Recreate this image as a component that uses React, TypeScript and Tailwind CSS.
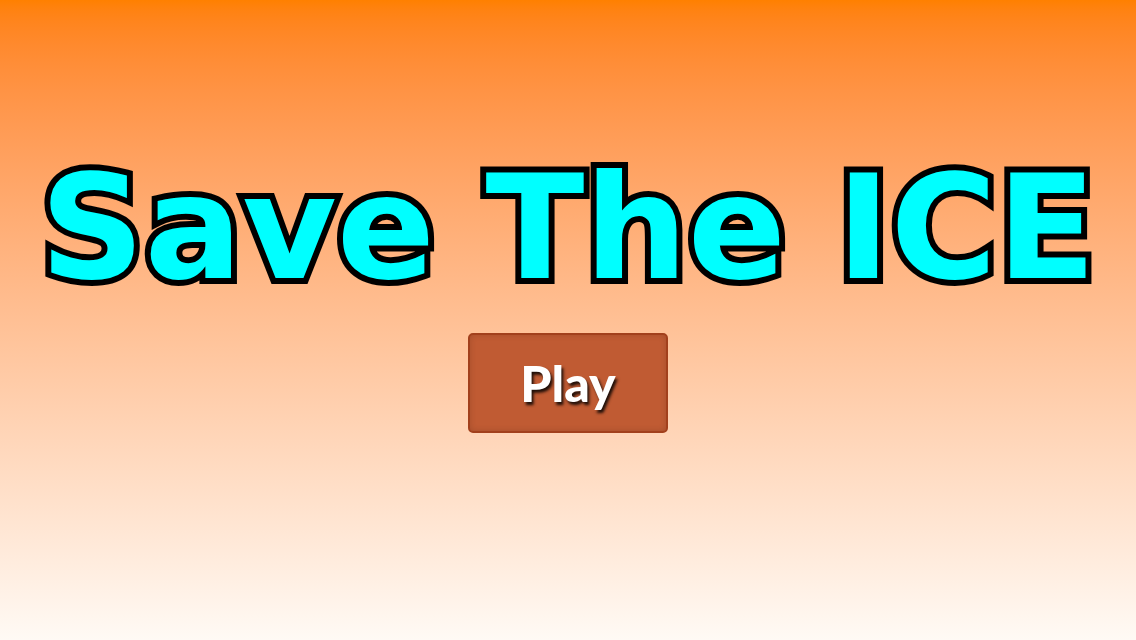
export default function App() {
  return (
    <div className="w-[1136px] h-[640px] bg-gradient-to-b from-[#ff8000] to-[#fffaf5] flex flex-col items-center pt-[155px] overflow-hidden">
      {/* Title */}
      <h1 className="font-['DejaVu_Sans',sans-serif] font-bold text-[145px] leading-none text-[#00ffff] [-webkit-text-stroke:12px_black] [paint-order:stroke_fill] whitespace-nowrap">
        Save The ICE
      </h1>

      {/* Play button */}
      <button className="mt-[33px] w-[200px] h-[100px] rounded-[5px] bg-[#c05b33] border-2 border-[#a2401c] shadow-[inset_0_0_6px_rgba(0,0,0,0.15)] flex items-center justify-center">
        <span className="font-['Lato',sans-serif] font-black text-[50px] leading-none text-white [text-shadow:2px_3px_3px_rgba(0,0,0,0.85)]">
          Play
        </span>
      </button>
    </div>
  );
}
